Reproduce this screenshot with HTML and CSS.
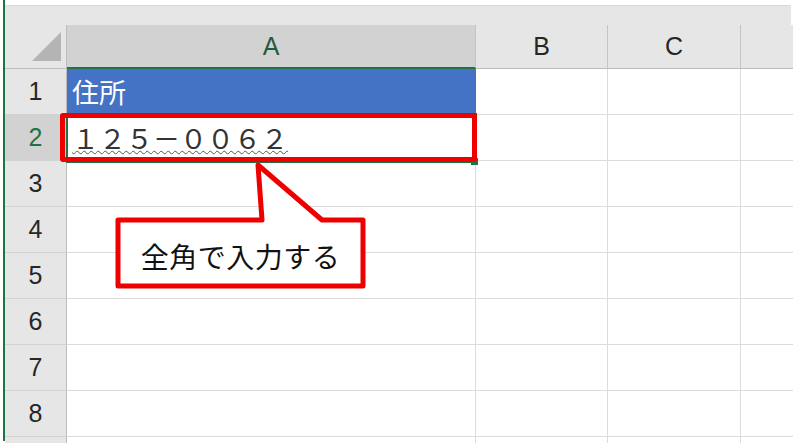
FILE: index.html
```html
<!DOCTYPE html>
<html lang="ja">
<head>
<meta charset="utf-8">
<title>Excel</title>
<link rel="stylesheet" href="styles.css">
</head>
<body>
<div class="app">
  <div class="sheet">
    <div class="band"></div>
    <div class="row hrow">
      <div class="rh corner"><span class="tri"></span></div>
      <div class="ch sel">A</div>
      <div class="ch">B</div>
      <div class="ch">C</div>
      <div class="ch last"></div>
    </div>
    <div class="row">
      <div class="rh">1</div>
      <div class="cell blue">住所</div>
      <div class="cell"></div>
      <div class="cell"></div>
      <div class="cell last"></div>
    </div>
    <div class="row">
      <div class="rh rsel">2</div>
      <div class="cell"><span class="zen">１２５－００６２</span></div>
      <div class="cell"></div>
      <div class="cell"></div>
      <div class="cell last"></div>
    </div>
    <div class="row">
      <div class="rh">3</div>
      <div class="cell"></div><div class="cell"></div><div class="cell"></div><div class="cell last"></div>
    </div>
    <div class="row">
      <div class="rh">4</div>
      <div class="cell"></div><div class="cell"></div><div class="cell"></div><div class="cell last"></div>
    </div>
    <div class="row">
      <div class="rh">5</div>
      <div class="cell"></div><div class="cell"></div><div class="cell"></div><div class="cell last"></div>
    </div>
    <div class="row">
      <div class="rh">6</div>
      <div class="cell"></div><div class="cell"></div><div class="cell"></div><div class="cell last"></div>
    </div>
    <div class="row">
      <div class="rh">7</div>
      <div class="cell"></div><div class="cell"></div><div class="cell"></div><div class="cell last"></div>
    </div>
    <div class="row">
      <div class="rh">8</div>
      <div class="cell"></div><div class="cell"></div><div class="cell"></div><div class="cell last"></div>
    </div>
    <div class="row tail">
      <div class="rh"></div>
      <div class="cell"></div><div class="cell"></div><div class="cell"></div><div class="cell last"></div>
    </div>
  </div>

  <div class="active"></div>
  <div class="handle"></div>
  <div class="redbox"></div>

  <div class="callout">
    <svg class="bubble" width="253" height="131" viewBox="0 0 253 131">
      <path d="M3,60 H147 L143,5 L207,60 H248 V126 H3 Z" fill="#ffffff" stroke="#ee0000" stroke-width="5" stroke-linejoin="round"/>
    </svg>
    <div class="ctext">全角で入力する</div>
  </div>
</div>
</body>
</html>
```

FILE: styles.css
```css
html, body {
  margin: 0;
  padding: 0;
  background: #ffffff;
}
body {
  width: 800px;
  height: 446px;
  overflow: hidden;
  font-family: "Liberation Sans", Arial, sans-serif;
}
.app {
  position: relative;
  margin-left: 3px;
  border-left: 2px solid #217346;
  width: 788px;
  height: 441px;
  padding-top: 5px;
  box-sizing: border-box;
}
.sheet {
  border-top: 1px solid #d8d8d8;
}
.band {
  height: 19px;
  background: #e6e6e6;
}
.row {
  display: grid;
  grid-template-columns: 62px 409px 132px 133px 52px;
  height: 46px;
}
.row > div {
  box-sizing: border-box;
}
.hrow {
  height: 44px;
}
.tail {
  height: 6px;
}
.rh {
  background: #e6e6e6;
  border-right: 1px solid #bcbcbc;
  border-bottom: 1px solid #d2d2d2;
  display: flex;
  align-items: center;
  justify-content: center;
  font-size: 25px;
  color: #262626;
}
.tail .rh, .tail .cell {
  border-bottom: none;
}
.rsel {
  background: #d2d2d2;
  color: #217346;
}
.corner {
  position: relative;
  border-bottom: 1px solid #bdbdbd;
}
.tri {
  position: absolute;
  left: 27px;
  top: 7px;
  width: 0;
  height: 0;
  border-left: 29px solid transparent;
  border-bottom: 29px solid #b4b4b4;
}
.ch {
  background: #e6e6e6;
  border-right: 1px solid #c4c4c4;
  border-bottom: 1px solid #bdbdbd;
  display: flex;
  align-items: center;
  justify-content: center;
  font-size: 25px;
  color: #262626;
}
.ch.sel {
  background: #d2d2d2;
  color: #1f5c3a;
  border-bottom: 2px solid #217346;
}
.ch.last, .cell.last {
  border-right: none;
}
.cell {
  border-right: 1px solid #dcdcdc;
  border-bottom: 1px solid #dcdcdc;
  display: flex;
  align-items: center;
  padding-left: 5px;
  font-family: "Noto Sans CJK JP", "Noto Sans CJK SC", sans-serif;
  font-size: 27px;
  color: #333333;
}
.cell.blue {
  background: #4472c4;
  color: #ffffff;
  border-right-color: #4472c4;
  border-bottom-color: #ffffff;
}
.zen {
  text-decoration: underline wavy #555555;
  text-decoration-thickness: 1px;
  text-underline-offset: 1px;
}
.active {
  position: absolute;
  left: 61px;
  top: 113px;
  width: 411px;
  height: 50px;
  border: 2px solid #217346;
  box-sizing: border-box;
}
.handle {
  position: absolute;
  left: 466px;
  top: 158px;
  width: 7px;
  height: 7px;
  background: #217346;
}
.redbox {
  position: absolute;
  left: 55px;
  top: 113px;
  width: 417px;
  height: 49px;
  border: 5px solid #ee0000;
  border-radius: 3px;
  box-sizing: border-box;
}
.callout {
  position: absolute;
  left: 110px;
  top: 160px;
  width: 253px;
  height: 131px;
}
.bubble {
  display: block;
}
.ctext {
  position: absolute;
  left: 5px;
  top: 63px;
  width: 241px;
  height: 62px;
  display: flex;
  align-items: center;
  justify-content: center;
  padding-top: 4px;
  box-sizing: border-box;
  font-family: "Noto Sans CJK JP", "Noto Sans CJK SC", sans-serif;
  font-size: 28px;
  letter-spacing: 0.5px;
  color: #111111;
}
```
